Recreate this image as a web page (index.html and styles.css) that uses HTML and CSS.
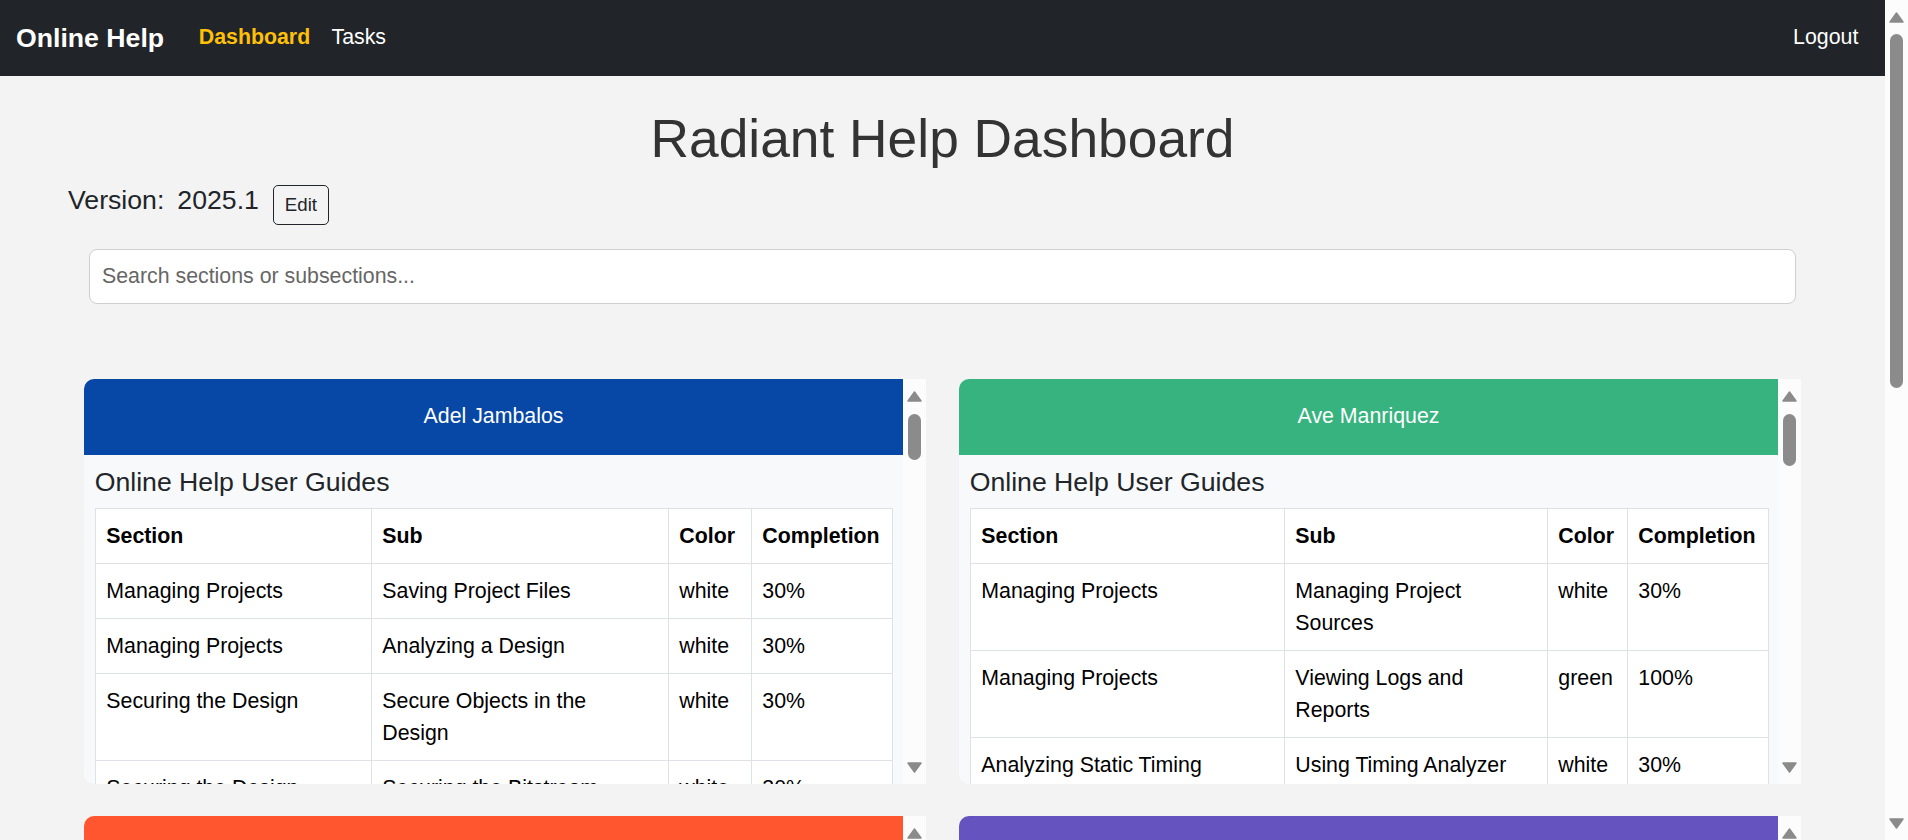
FILE: index.html
```html
<!DOCTYPE html>
<html lang="en">
<head>
<meta charset="utf-8">
<title>Radiant Help Dashboard</title>
<link rel="stylesheet" href="styles.css">
</head>
<body>
<nav class="navbar">
  <a class="brand" href="#">Online Help</a>
  <a class="nav-link active" href="#">Dashboard</a>
  <a class="nav-link" href="#">Tasks</a>
  <span class="spacer"></span>
  <a class="nav-link" href="#">Logout</a>
</nav>

<main class="main">
  <h1 class="title">Radiant Help Dashboard</h1>
  <div class="version-row">
    <span class="version-label">Version:</span>
    <span class="version-value">2025.1</span>
    <button class="btn-edit" type="button">Edit</button>
  </div>
  <div class="search-wrap">
    <input class="search" type="text" placeholder="Search sections or subsections...">
  </div>

  <div class="grid">
    <section class="card">
      <div class="card-scroll">
        <div class="card-head blue">Adel Jambalos</div>
        <div class="card-body">
          <h5 class="card-title">Online Help User Guides</h5>
          <table class="tbl cols-a">
            <colgroup><col class="c-sec"><col class="c-sub"><col class="c-col"><col class="c-cmp"></colgroup>
            <thead><tr><th>Section</th><th>Sub</th><th>Color</th><th>Completion</th></tr></thead>
            <tbody>
              <tr><td>Managing Projects</td><td>Saving Project Files</td><td>white</td><td>30%</td></tr>
              <tr><td>Managing Projects</td><td>Analyzing a Design</td><td>white</td><td>30%</td></tr>
              <tr><td>Securing the Design</td><td>Secure Objects in the Design</td><td>white</td><td>30%</td></tr>
              <tr><td>Securing the Design</td><td>Securing the Bitstream</td><td>white</td><td>30%</td></tr>
            </tbody>
          </table>
        </div>
      </div>
      <div class="sbar">
        <div class="sb-btn up"><svg width="15" height="11" viewBox="0 0 15 11"><path d="M7.5 1 L14 10 L1 10 Z" fill="#8b8b8b" stroke="#8b8b8b" stroke-width="1.5" stroke-linejoin="round"/></svg></div>
        <div class="sb-track"><div class="sb-thumb t-card1"></div></div>
        <div class="sb-btn down"><svg width="15" height="11" viewBox="0 0 15 11"><path d="M1 1 L14 1 L7.5 10 Z" fill="#8b8b8b" stroke="#8b8b8b" stroke-width="1.5" stroke-linejoin="round"/></svg></div>
      </div>
    </section>

    <section class="card">
      <div class="card-scroll">
        <div class="card-head green">Ave Manriquez</div>
        <div class="card-body">
          <h5 class="card-title">Online Help User Guides</h5>
          <table class="tbl cols-b">
            <colgroup><col class="c-sec"><col class="c-sub"><col class="c-col"><col class="c-cmp"></colgroup>
            <thead><tr><th>Section</th><th>Sub</th><th>Color</th><th>Completion</th></tr></thead>
            <tbody>
              <tr><td>Managing Projects</td><td>Managing Project Sources</td><td>white</td><td>30%</td></tr>
              <tr><td>Managing Projects</td><td>Viewing Logs and Reports</td><td>green</td><td>100%</td></tr>
              <tr><td>Analyzing Static Timing</td><td>Using Timing Analyzer</td><td>white</td><td>30%</td></tr>
            </tbody>
          </table>
        </div>
      </div>
      <div class="sbar">
        <div class="sb-btn up"><svg width="15" height="11" viewBox="0 0 15 11"><path d="M7.5 1 L14 10 L1 10 Z" fill="#8b8b8b" stroke="#8b8b8b" stroke-width="1.5" stroke-linejoin="round"/></svg></div>
        <div class="sb-track"><div class="sb-thumb t-card2"></div></div>
        <div class="sb-btn down"><svg width="15" height="11" viewBox="0 0 15 11"><path d="M1 1 L14 1 L7.5 10 Z" fill="#8b8b8b" stroke="#8b8b8b" stroke-width="1.5" stroke-linejoin="round"/></svg></div>
      </div>
    </section>

    <section class="card">
      <div class="card-scroll">
        <div class="card-head red">Carlo Dizon</div>
        <div class="card-body">
          <h5 class="card-title">Online Help User Guides</h5>
          <table class="tbl cols-a">
            <colgroup><col class="c-sec"><col class="c-sub"><col class="c-col"><col class="c-cmp"></colgroup>
            <thead><tr><th>Section</th><th>Sub</th><th>Color</th><th>Completion</th></tr></thead>
            <tbody>
              <tr><td>Managing Projects</td><td>Creating a New Project</td><td>white</td><td>30%</td></tr>
              <tr><td>Synthesizing the Design</td><td>Running Synthesis</td><td>white</td><td>30%</td></tr>
            </tbody>
          </table>
        </div>
      </div>
      <div class="sbar">
        <div class="sb-btn up"><svg width="15" height="11" viewBox="0 0 15 11"><path d="M7.5 1 L14 10 L1 10 Z" fill="#8b8b8b" stroke="#8b8b8b" stroke-width="1.5" stroke-linejoin="round"/></svg></div>
        <div class="sb-track"><div class="sb-thumb t-card1"></div></div>
        <div class="sb-btn down"><svg width="15" height="11" viewBox="0 0 15 11"><path d="M1 1 L14 1 L7.5 10 Z" fill="#8b8b8b" stroke="#8b8b8b" stroke-width="1.5" stroke-linejoin="round"/></svg></div>
      </div>
    </section>

    <section class="card">
      <div class="card-scroll">
        <div class="card-head purple">Bea Santos</div>
        <div class="card-body">
          <h5 class="card-title">Online Help User Guides</h5>
          <table class="tbl cols-a">
            <colgroup><col class="c-sec"><col class="c-sub"><col class="c-col"><col class="c-cmp"></colgroup>
            <thead><tr><th>Section</th><th>Sub</th><th>Color</th><th>Completion</th></tr></thead>
            <tbody>
              <tr><td>Entering the Design</td><td>Using the Source Editor</td><td>white</td><td>30%</td></tr>
              <tr><td>Running Simulation</td><td>Simulation Wizard</td><td>white</td><td>30%</td></tr>
            </tbody>
          </table>
        </div>
      </div>
      <div class="sbar">
        <div class="sb-btn up"><svg width="15" height="11" viewBox="0 0 15 11"><path d="M7.5 1 L14 10 L1 10 Z" fill="#8b8b8b" stroke="#8b8b8b" stroke-width="1.5" stroke-linejoin="round"/></svg></div>
        <div class="sb-track"><div class="sb-thumb t-card1"></div></div>
        <div class="sb-btn down"><svg width="15" height="11" viewBox="0 0 15 11"><path d="M1 1 L14 1 L7.5 10 Z" fill="#8b8b8b" stroke="#8b8b8b" stroke-width="1.5" stroke-linejoin="round"/></svg></div>
      </div>
    </section>
  </div>
</main>

<div class="page-sbar">
  <div class="sb-btn up"><svg width="15" height="11" viewBox="0 0 15 11"><path d="M7.5 1 L14 10 L1 10 Z" fill="#8b8b8b" stroke="#8b8b8b" stroke-width="1.5" stroke-linejoin="round"/></svg></div>
  <div class="sb-track"><div class="sb-thumb t-page"></div></div>
  <div class="sb-btn down"><svg width="15" height="11" viewBox="0 0 15 11"><path d="M1 1 L14 1 L7.5 10 Z" fill="#8b8b8b" stroke="#8b8b8b" stroke-width="1.5" stroke-linejoin="round"/></svg></div>
</div>
</body>
</html>
```

FILE: styles.css
```css
* { box-sizing: border-box; }

html, body {
  margin: 0;
  padding: 0;
}

body {
  background: #f3f3f3;
  font-family: "Liberation Sans", Arial, sans-serif;
  font-size: 21.33px;
  line-height: 1.5;
  color: #212529;
  padding-right: 23px;
}

/* ---------- drawn scrollbars ---------- */
.sbar,
.page-sbar {
  width: 23px;
  background: #fcfcfc;
  display: flex;
  flex-direction: column;
  flex: none;
}
.page-sbar {
  position: fixed;
  top: 0;
  right: 0;
  height: 100vh;
}
.sb-btn {
  height: 30px;
  flex: none;
  display: flex;
  justify-content: center;
}
.sb-btn svg { display: block; }
.sb-btn.up { align-items: flex-start; padding-top: 12px; }
.sb-btn.down { align-items: flex-start; padding-top: 8px; }
.sb-track {
  flex: 1;
  padding: 5px 0;
  display: flex;
  justify-content: center;
  align-items: flex-start;
}
.sb-thumb {
  width: 13px;
  background: #8b8b8b;
  border-radius: 7px;
}
.t-card1 { height: 46px; }
.t-card2 { height: 52px; }
.t-page { height: 354px; margin-top: -1px; }

/* ---------- navbar ---------- */
.navbar {
  height: 76px;
  background: #212529;
  display: flex;
  align-items: center;
  padding: 0 16px;
}
.navbar a { text-decoration: none; }
.brand {
  color: #fff;
  font-size: 26.67px;
  font-weight: bold;
  margin-right: 24px;
}
.nav-link {
  color: #fff;
  font-size: 21.33px;
  padding: 0 10.67px;
}
.nav-link.active {
  color: #ffc107;
  font-weight: bold;
}
.spacer { flex: 1; }

/* ---------- header area ---------- */
.main {
  padding-bottom: 142px;
}
.title {
  margin: 31px 0 0;
  text-align: center;
  font-size: 53.33px;
  line-height: 1.2;
  font-weight: normal;
  color: #333;
}
.version-row {
  display: flex;
  align-items: flex-start;
  margin-top: 13px;
  padding-left: 68px;
}
.version-label,
.version-value {
  font-size: 26.67px;
  line-height: 32px;
  color: #212529;
}
.version-value { margin-left: 13px; }
.btn-edit {
  margin: 1px 0 0 14px;
  height: 40px;
  padding: 0 11px;
  font-family: "Liberation Sans", Arial, sans-serif;
  font-size: 18.67px;
  color: #212529;
  background: transparent;
  border: 1px solid #212529;
  border-radius: 5px;
}
.search-wrap {
  padding: 0 89px;
  margin-top: 24px;
}
.search {
  display: block;
  width: 100%;
  height: 55px;
  padding: 0 12px;
  font-family: "Liberation Sans", Arial, sans-serif;
  font-size: 21.33px;
  color: #212529;
  background: #fff;
  border: 1px solid #cfcfcf;
  border-radius: 8px;
  outline: none;
}
.search::placeholder { color: #666; }

/* ---------- cards ---------- */
.grid {
  display: grid;
  grid-template-columns: 842px 842px;
  column-gap: 33px;
  row-gap: 32px;
  justify-content: center;
  margin-top: 75px;
}
.card {
  height: 405px;
  display: flex;
}
.card-scroll {
  flex: 1;
  min-width: 0;
  overflow: hidden;
  background: #f8f9fa;
  border-radius: 10px 0 0 10px;
}
.card-head {
  height: 76px;
  display: flex;
  align-items: center;
  justify-content: center;
  color: #fff;
  font-size: 21.33px;
}
.blue { background: #0747a6; }
.green { background: #36b37e; }
.red { background: #ff5630; }
.purple { background: #6554c0; }

.card-body { padding: 10.67px; }
.card-title {
  margin: 0 0 10.67px;
  font-size: 26.67px;
  line-height: 32px;
  font-weight: normal;
  color: #212529;
}

.tbl {
  width: 100%;
  table-layout: fixed;
  border-collapse: collapse;
  background: #fff;
  color: #000;
}
.tbl th,
.tbl td {
  border: 1px solid #dee2e6;
  padding: 11px 10.67px;
  line-height: 32px;
  text-align: left;
  vertical-align: top;
  font-size: 21.33px;
}
.tbl th { font-weight: bold; }

.cols-a .c-sec { width: 276px; }
.cols-a .c-sub { width: 297px; }
.cols-a .c-col { width: 83px; }
.cols-a .c-cmp { width: 141px; }

.cols-b .c-sec { width: 314px; }
.cols-b .c-sub { width: 263px; }
.cols-b .c-col { width: 80px; }
.cols-b .c-cmp { width: 141px; }
```
